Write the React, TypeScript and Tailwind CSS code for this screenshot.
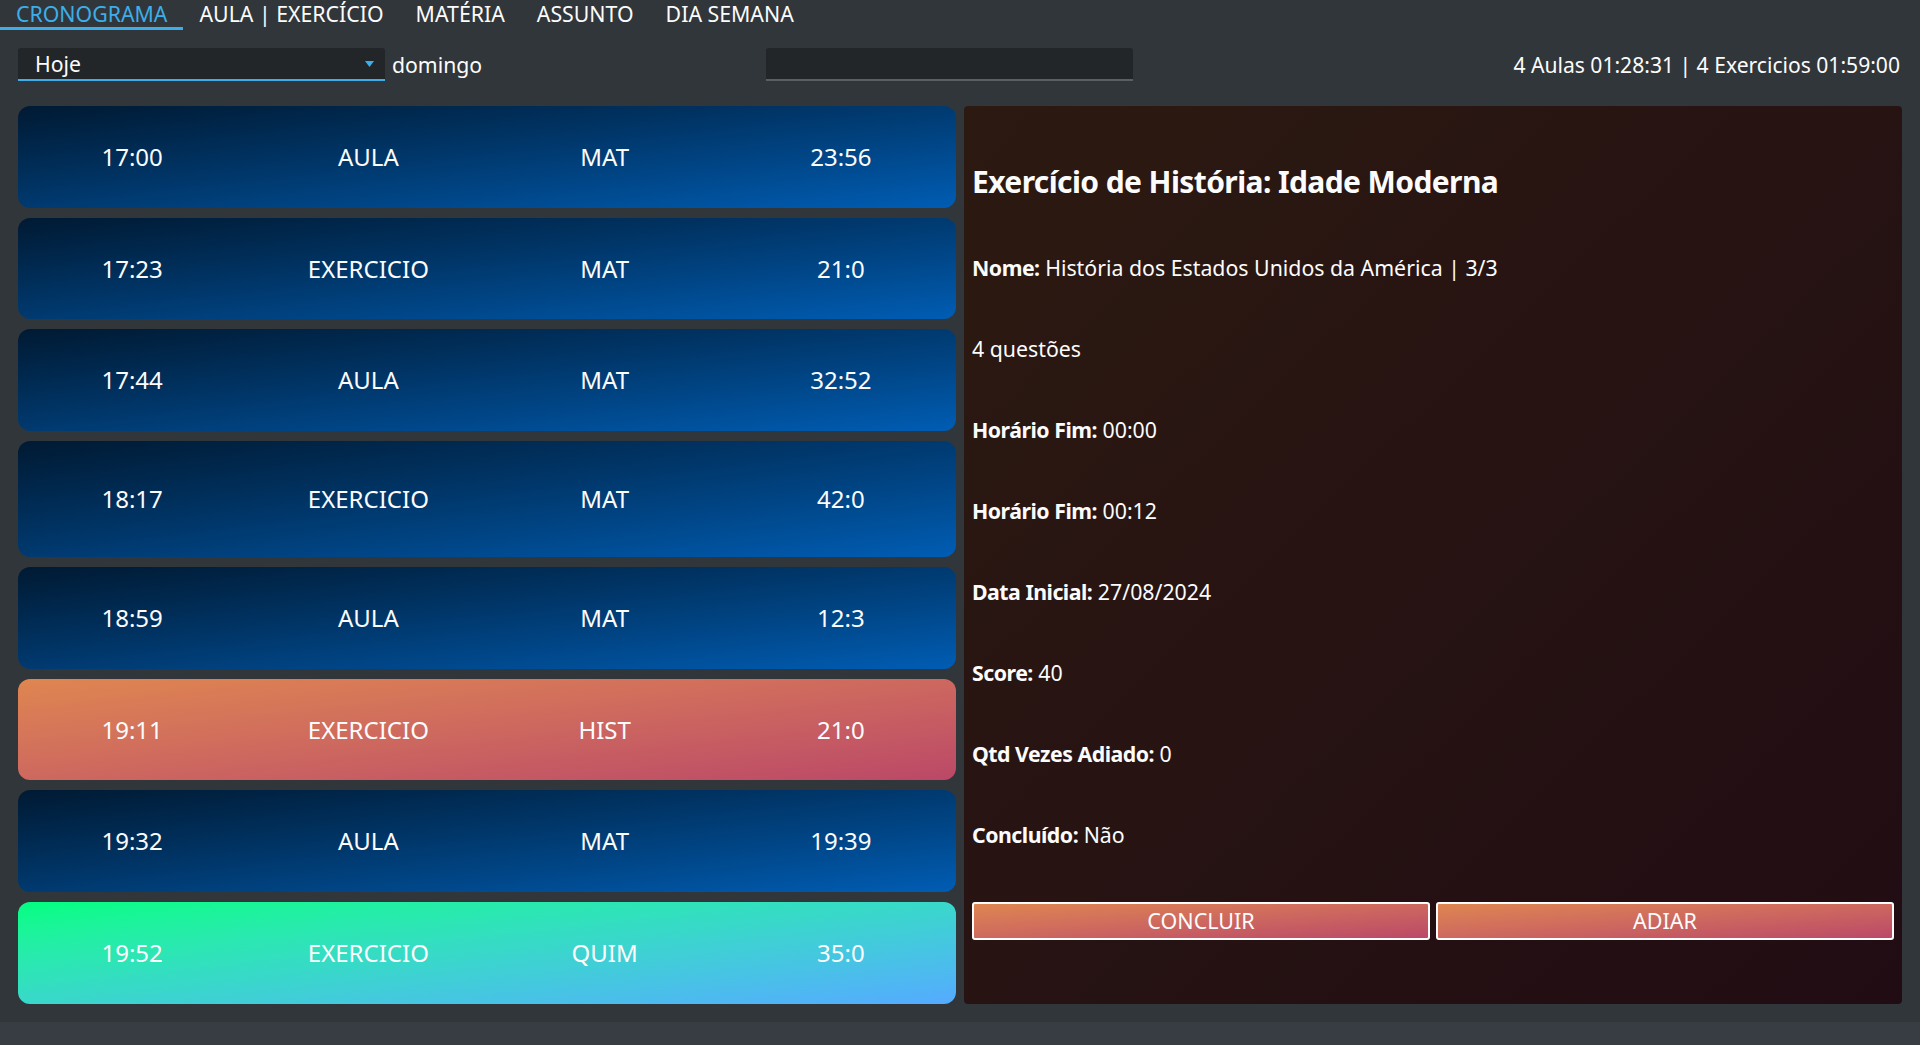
import React from "react";

type Item = { t: string; k: string; m: string; d: string; v: "blue" | "pink" | "green"; tall?: boolean };

const items: Item[] = [
  { t: "17:00", k: "AULA", m: "MAT", d: "23:56", v: "blue" },
  { t: "17:23", k: "EXERCICIO", m: "MAT", d: "21:0", v: "blue" },
  { t: "17:44", k: "AULA", m: "MAT", d: "32:52", v: "blue" },
  { t: "18:17", k: "EXERCICIO", m: "MAT", d: "42:0", v: "blue", tall: true },
  { t: "18:59", k: "AULA", m: "MAT", d: "12:3", v: "blue" },
  { t: "19:11", k: "EXERCICIO", m: "HIST", d: "21:0", v: "pink" },
  { t: "19:32", k: "AULA", m: "MAT", d: "19:39", v: "blue" },
  { t: "19:52", k: "EXERCICIO", m: "QUIM", d: "35:0", v: "green" },
];

const bg: Record<Item["v"], string> = {
  blue: "bg-gradient-to-br from-[#001a33] to-[#005db4]",
  pink: "bg-gradient-to-br from-[#df8650] to-[#bb4867]",
  green: "bg-gradient-to-br from-[#00ff80] to-[#55aaff]",
};

const tabs = ["CRONOGRAMA", "AULA | EXERCÍCIO", "MATÉRIA", "ASSUNTO", "DIA SEMANA"];

const details: [string, string][] = [
  ["Nome:", " História dos Estados Unidos da América | 3/3"],
  ["", "4 questões"],
  ["Horário Fim:", " 00:00"],
  ["Horário Fim:", " 00:12"],
  ["Data Inicial:", " 27/08/2024"],
  ["Score:", " 40"],
  ["Qtd Vezes Adiado:", " 0"],
  ["Concluído:", " Não"],
];

export default function App() {
  return (
    <div
      className="w-[1920px] h-[1045px] bg-[#31363b] text-[#fcfcfc] flex flex-col overflow-hidden"
      style={{ fontFamily: '"Noto Sans", "Open Sans", sans-serif' }}
    >
      {/* Tabs */}
      <div className="flex h-[30px] text-[21.3px] leading-none">
        {tabs.map((t, i) => (
          <div
            key={t}
            className={
              "px-[16px] flex items-center pt-[1px] " +
              (i === 0 ? "text-[#3daee9] border-b-[3px] border-[#3daee9]" : "border-b-[3px] border-transparent")
            }
          >
            {t}
          </div>
        ))}
      </div>

      {/* Controls */}
      <div className="flex items-center mt-[18px] h-[33px] pl-[18px] pr-[20px] text-[21.2px]">
        <div className="flex items-center w-[748px]">
          <div className="relative w-[367px] h-[33px] bg-[#232629] rounded-t-[3px] border-b-2 border-[#3daee9] flex items-center pl-[17px]">
            <span>Hoje</span>
            <svg className="absolute right-[11px] top-[13px]" width="9" height="6" viewBox="0 0 9 6">
              <path d="M0 0 L9 0 L4.5 6 Z" fill="#3daee9" />
            </svg>
          </div>
          <span className="ml-[7px]">domingo</span>
        </div>
        <div className="w-[367px] h-[33px] bg-[#232629] rounded-t-[3px] border-b-2 border-[#5b5f64]" />
        <div className="flex-1 text-right text-[21.1px]">4 Aulas 01:28:31 | 4 Exercicios 01:59:00</div>
      </div>

      {/* Main */}
      <div className="flex gap-[8px] px-[18px] mt-[25px] h-[898px]">
        <div className="w-[938px] flex flex-col gap-[10px]">
          {items.map((it, i) => (
            <div
              key={i}
              className={
                "rounded-[12px] flex items-center " +
                (it.tall ? "h-[116px] " : "h-[101.7px] ") +
                bg[it.v]
              }
            >
              <div className="grid grid-cols-4 text-center text-[24px] w-[945px] shrink-0 -ml-[4px]">
                <span>{it.t}</span>
                <span>{it.k}</span>
                <span>{it.m}</span>
                <span>{it.d}</span>
              </div>
            </div>
          ))}
        </div>

        <div className="flex-1 rounded-[4px] bg-gradient-to-br from-[#2c1a11] to-[#210c13] px-[8px] pt-[35px] flex flex-col text-[21.3px]">
          <div className="h-[81px] mb-[5.5px] flex items-center text-[30px] font-bold tracking-[-0.6px]">
            Exercício de História: Idade Moderna
          </div>
          {details.map(([b, v], i) => (
            <div key={i} className="h-[81px] flex items-center whitespace-pre">
              {b && <span className="font-bold tracking-[-0.5px]">{b}</span>}
              <span>{v}</span>
            </div>
          ))}
          <div className="mt-[26.5px] flex gap-[6px]">
            {["CONCLUIR", "ADIAR"].map((b) => (
              <button
                key={b}
                className="flex-1 h-[38px] border-2 border-[#fcfcfc] rounded-[3px] bg-gradient-to-br from-[#df8650] to-[#bb4867] text-[21.5px] text-[#fcfcfc] flex items-center justify-center"
              >
                {b}
              </button>
            ))}
          </div>
        </div>
      </div>

      <div className="mt-auto h-[23px] bg-[#383c43]" />
    </div>
  );
}
